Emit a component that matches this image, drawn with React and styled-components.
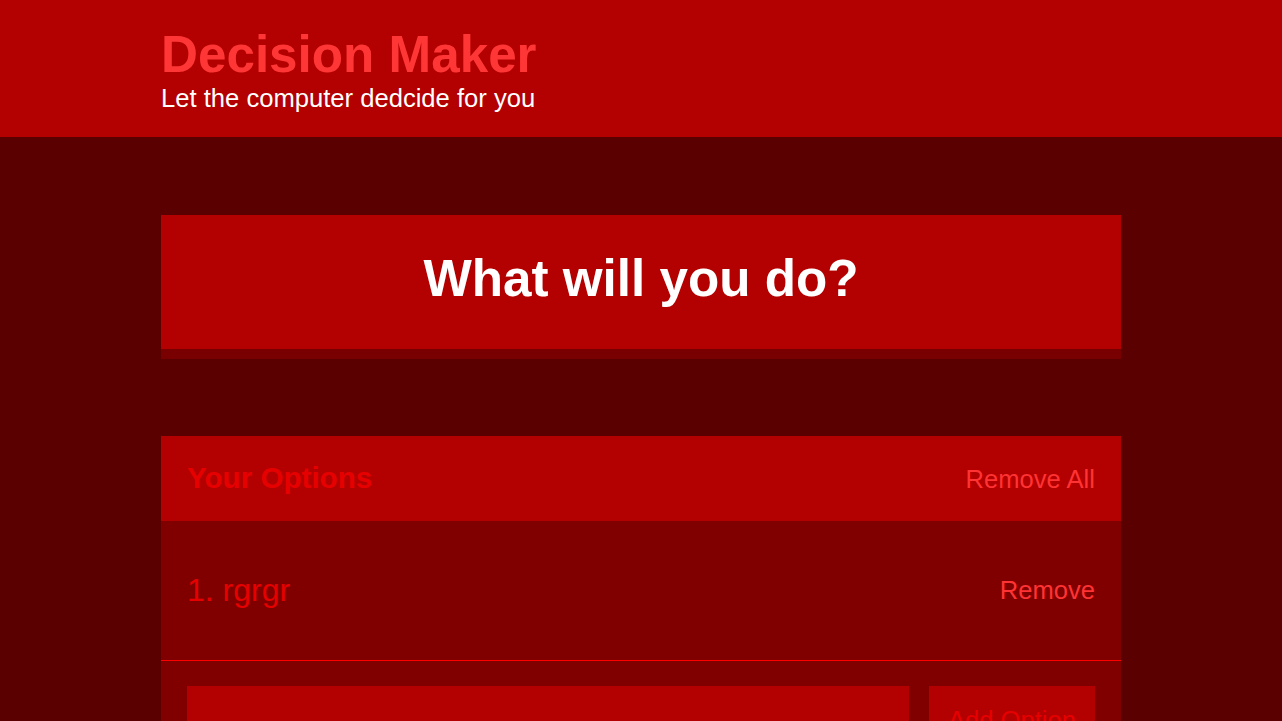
import { createGlobalStyle } from 'styled-components'
import styled from 'styled-components'

const GlobalStyle = createGlobalStyle`
  html {
    overflow: hidden;
  }
  body {
    margin: 0;
    background: #5a0000;
    font-family: "Liberation Sans", Arial, Helvetica, sans-serif;
  }
`;

const Container = styled.div`
  width: 960px;
  margin: 0 auto;
`;

const Header = styled.header`
  background: #b30000;
  padding: 25px 0 24px;
`;

const Title = styled.h1`
  margin: 0;
  color: #ff3636;
  font-family: "Liberation Sans", Arial, sans-serif;
  font-size: 51.2px;
  font-weight: bold;
`;

const Subtitle = styled.h2`
  margin: 0;
  color: #ffffff;
  font-family: "Liberation Sans", Arial, sans-serif;
  font-size: 25.6px;
  font-weight: normal;
`;

const Main = styled.main`
  padding-top: 78px;
`;

const BigButton = styled.button`
  display: block;
  width: 100%;
  margin: 0 0 87px;
  padding: 34px 0 41px;
  border: none;
  background: #b30000;
  box-shadow: 0 10px 0 #780000;
  color: #ffffff;
  font-family: "Liberation Sans", Arial, sans-serif;
  font-size: 51.2px;
  font-weight: bold;
  cursor: pointer;
`;

const Widget = styled.section`
  background: #800000;
`;

const WidgetHeader = styled.div`
  display: flex;
  justify-content: space-between;
  align-items: baseline;
  box-sizing: border-box;
  height: 85px;
  padding: 25px 26px 0;
  background: #b30000;
`;

const WidgetTitle = styled.h3`
  margin: 0;
  color: #e60000;
  font-family: "Liberation Sans", Arial, sans-serif;
  font-size: 29.6px;
  font-weight: bold;
`;

const LinkButton = styled.button`
  padding: 0;
  border: none;
  background: none;
  color: #ff3333;
  font-family: "Liberation Sans", Arial, sans-serif;
  font-size: 25.6px;
  cursor: pointer;
`;

const Option = styled.div`
  display: flex;
  justify-content: space-between;
  align-items: center;
  height: 139px;
  padding: 0 26px;
  border-bottom: 1px solid #ff0000;
`;

const OptionText = styled.p`
  margin: 0;
  color: #e60000;
  font-family: "Liberation Sans", Arial, sans-serif;
  font-size: 32px;
`;

const AddForm = styled.form`
  display: flex;
  gap: 20px;
  padding: 25px 26px;
`;

const Input = styled.input`
  flex: 1;
  height: 68px;
  padding: 0 12px;
  border: none;
  background: #b30000;
  color: #ffffff;
  font-family: "Liberation Sans", Arial, sans-serif;
  font-size: 25.6px;
  outline: none;
`;

const AddButton = styled.button`
  width: 166px;
  padding: 0;
  border: none;
  background: #b30000;
  color: #e60000;
  font-family: "Liberation Sans", Arial, sans-serif;
  font-size: 25.6px;
`;

export default function App() {
  const options = ['rgrgr'];
  return (
    <>
      <GlobalStyle />
      <Header>
        <Container>
          <Title>Decision Maker</Title>
          <Subtitle>Let the computer dedcide for you</Subtitle>
        </Container>
      </Header>
      <Main>
        <Container>
          <BigButton>What will you do?</BigButton>
          <Widget>
            <WidgetHeader>
              <WidgetTitle>Your Options</WidgetTitle>
              <LinkButton>Remove All</LinkButton>
            </WidgetHeader>
            {options.map((option, i) => (
              <Option key={option}>
                <OptionText>{i + 1}. {option}</OptionText>
                <LinkButton>Remove</LinkButton>
              </Option>
            ))}
            <AddForm onSubmit={(e) => e.preventDefault()}>
              <Input type="text" name="option" />
              <AddButton>Add Option</AddButton>
            </AddForm>
          </Widget>
        </Container>
      </Main>
    </>
  )
}
